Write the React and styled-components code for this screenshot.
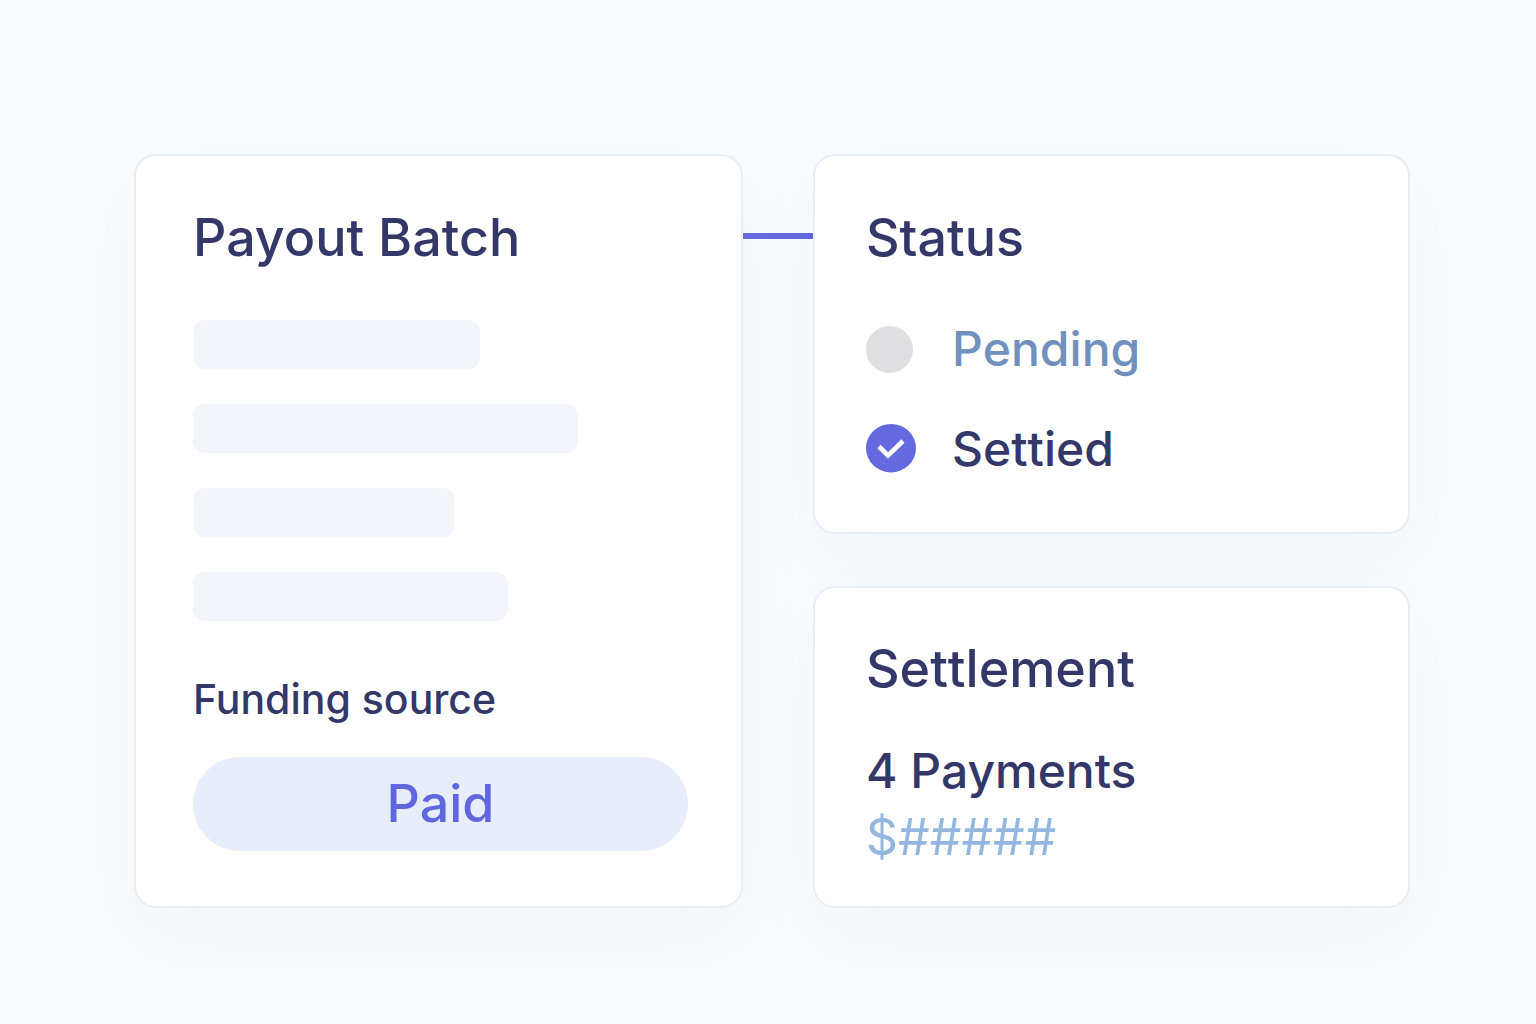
import React from 'react';
import styled, { createGlobalStyle } from 'styled-components';

const GlobalStyle = createGlobalStyle`
    * {
        box-sizing: border-box;
    }

    body {
        margin: 0;
        min-height: 100vh;
        background: #fbfcfe;
        color: #343868;
        font-family: Inter, 'Liberation Sans', sans-serif;
        font-weight: 500;
    }
`

const Board = styled.main`
    display: grid;
    grid-template-columns: minmax(0, 609fr) 70px minmax(0, 597fr);
    padding: 154px 126px 116px 134px;
`

const Column = styled.div`
    display: flex;
    flex-direction: column;
    gap: 52px;
`

const Card = styled.section`
    padding: ${(props) => props.$padding};
    border: 2px solid #e6eef6;
    border-radius: 22px;
    background: #fff;
    box-shadow: 0 28px 80px rgba(40, 40, 50, 0.04);
`

const Connector = styled.div`
    height: 6px;
    margin-top: 79px;
    background: #6469df;
`

const Title = styled.h2`
    margin: 0;
    font-size: 52px;
    line-height: 64px;
    font-weight: 500;
    font-kerning: ${(props) => props.$kerning};
`

const Bars = styled.div`
    display: flex;
    flex-direction: column;
    gap: 35px;
    margin-top: 50px;
`

const Bar = styled.div`
    width: ${(props) => props.$width}px;
    max-width: 100%;
    height: 49px;
    border-radius: 12px;
    background: #f2f5fa;
`

const Label = styled.h3`
    margin: 54px 0 34px;
    font-size: 41px;
    line-height: 48px;
    font-weight: 500;
`

const Pill = styled.button`
    display: block;
    width: 100%;
    height: 94px;
    padding: 0;
    border: 0;
    border-radius: 47px;
    background: #e8edfb;
    color: #6067dd;
    font: inherit;
    font-size: 52px;
    line-height: 64px;
`

const StatusList = styled.ul`
    display: flex;
    flex-direction: column;
    gap: 42px;
    margin: 50px 0 0;
    padding: 0;
    list-style: none;
`

const StatusItem = styled.li`
    display: grid;
    grid-template-columns: 50px 1fr;
    gap: 36px;
    align-items: center;
    font-size: 48px;
    line-height: 58px;
    font-kerning: none;
    color: ${(props) => props.$color};
`

const Dot = styled.span`
    width: 47px;
    height: 47px;
    border-radius: 50%;
    background: #dfdee0;
`

const Payments = styled.p`
    margin: 41px 0 8px;
    font-size: 48px;
    line-height: 58px;
`

const Amount = styled.p`
    margin: 0;
    color: #94b7e0;
    font-size: 50px;
    line-height: 58px;
    font-weight: 400;
    font-kerning: none;
`

const CheckIcon = () => (
    <svg width="50" height="50" viewBox="0 0 50 50" fill="none" aria-hidden="true">
        <ellipse cx="25" cy="24.2" rx="25" ry="24.2" fill="#6469df" />
        <path d="M13 22.5 L22 31.5 L37 17" stroke="#fff" strokeWidth="4.6" />
    </svg>
)

const bars = [287, 385, 262, 315];

const App = () => (
    <React.Fragment>
        <GlobalStyle />
        <Board>
            <Card $padding="50px 53px 55px 57px">
                <Title>Payout Batch</Title>
                <Bars>
                    {bars.map((width) => (
                        <Bar key={width} $width={width} />
                    ))}
                </Bars>
                <Label id="funding">Funding source</Label>
                <Pill type="button" aria-describedby="funding">Paid</Pill>
            </Card>
            <Connector />
            <Column>
                <Card $padding="50px 51px 54px">
                    <Title>Status</Title>
                    <StatusList>
                        <StatusItem $color="#7090bd">
                            <Dot />
                            Pending
                        </StatusItem>
                        <StatusItem>
                            <CheckIcon />
                            Settied
                        </StatusItem>
                    </StatusList>
                </Card>
                <Card $padding="49px 51px 40px">
                    <Title $kerning="none">Settlement</Title>
                    <Payments>4 Payments</Payments>
                    <Amount>$#####</Amount>
                </Card>
            </Column>
        </Board>
    </React.Fragment>
)

export default App;
